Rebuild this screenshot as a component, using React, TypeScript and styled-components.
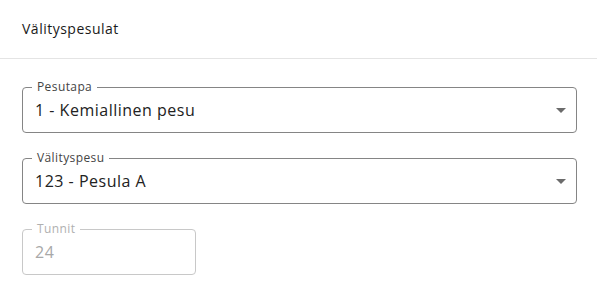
import React from "react";
import styled, { createGlobalStyle } from "styled-components";

const Global = createGlobalStyle`
  html, body { margin: 0; padding: 0; background: #ffffff; }
  body { font-family: "Open Sans", "Liberation Sans", sans-serif; color: #222; }
  * { box-sizing: border-box; }
`;

const Page = styled.div`
  width: 597px;
  min-height: 303px;
  background: #fff;
`;

const Header = styled.div`
  height: 59px;
  display: flex;
  align-items: center;
  padding: 0 22px 2px;
  border-bottom: 1px solid #e4e4e4;
`;

const Title = styled.h2`
  margin: 0;
  font-size: 14px;
  font-weight: 500;
  letter-spacing: 0.5px;
  color: #1a1a1a;
`;

const Form = styled.div`
  display: flex;
  flex-direction: column;
  align-items: flex-start;
  gap: 19px;
  padding: 22px 20px 0 22px;
`;

const Field = styled.fieldset<{ $width: number; $disabled?: boolean }>`
  margin: 0;
  width: ${(p) => p.$width}px;
  padding: 0 0 0 12px;
  border: 1px solid ${(p) => (p.$disabled ? "#c8c8c8" : "#858585")};
  border-radius: 4px;
  min-width: 0;
`;

const Legend = styled.legend<{ $disabled?: boolean }>`
  margin-left: -3px;
  padding: 0 5px;
  font-size: 12px;
  line-height: 12px;
  letter-spacing: 0.4px;
  color: ${(p) => (p.$disabled ? "#b0b0b0" : "#444")};
`;

const Row = styled.div`
  height: 39px;
  padding: 0 10px 5px 0;
  display: flex;
  align-items: center;
`;

const Value = styled.span<{ $disabled?: boolean }>`
  font-size: 16px;
  letter-spacing: 0.5px;
  color: ${(p) => (p.$disabled ? "#a8a8a8" : "#222")};
`;

const Arrow = styled.svg`
  margin-left: auto;
  width: 10px;
  height: 5px;
  fill: #6b6b6b;
`;

function SelectField({ label, value }: { label: string; value: string }) {
  return (
    <Field $width={555}>
      <Legend>{label}</Legend>
      <Row>
        <Value>{value}</Value>
        <Arrow viewBox="0 0 10 5">
          <path d="M0 0l5 5 5-5z" />
        </Arrow>
      </Row>
    </Field>
  );
}

export default function App() {
  return (
    <Page>
      <Global />
      <Header>
        <Title>Välityspesulat</Title>
      </Header>
      <Form>
        <SelectField label="Pesutapa" value="1 - Kemiallinen pesu" />
        <SelectField label="Välityspesu" value="123 - Pesula A" />
        <Field $width={174} $disabled>
          <Legend $disabled>Tunnit</Legend>
          <Row>
            <Value $disabled>24</Value>
          </Row>
        </Field>
      </Form>
    </Page>
  );
}
